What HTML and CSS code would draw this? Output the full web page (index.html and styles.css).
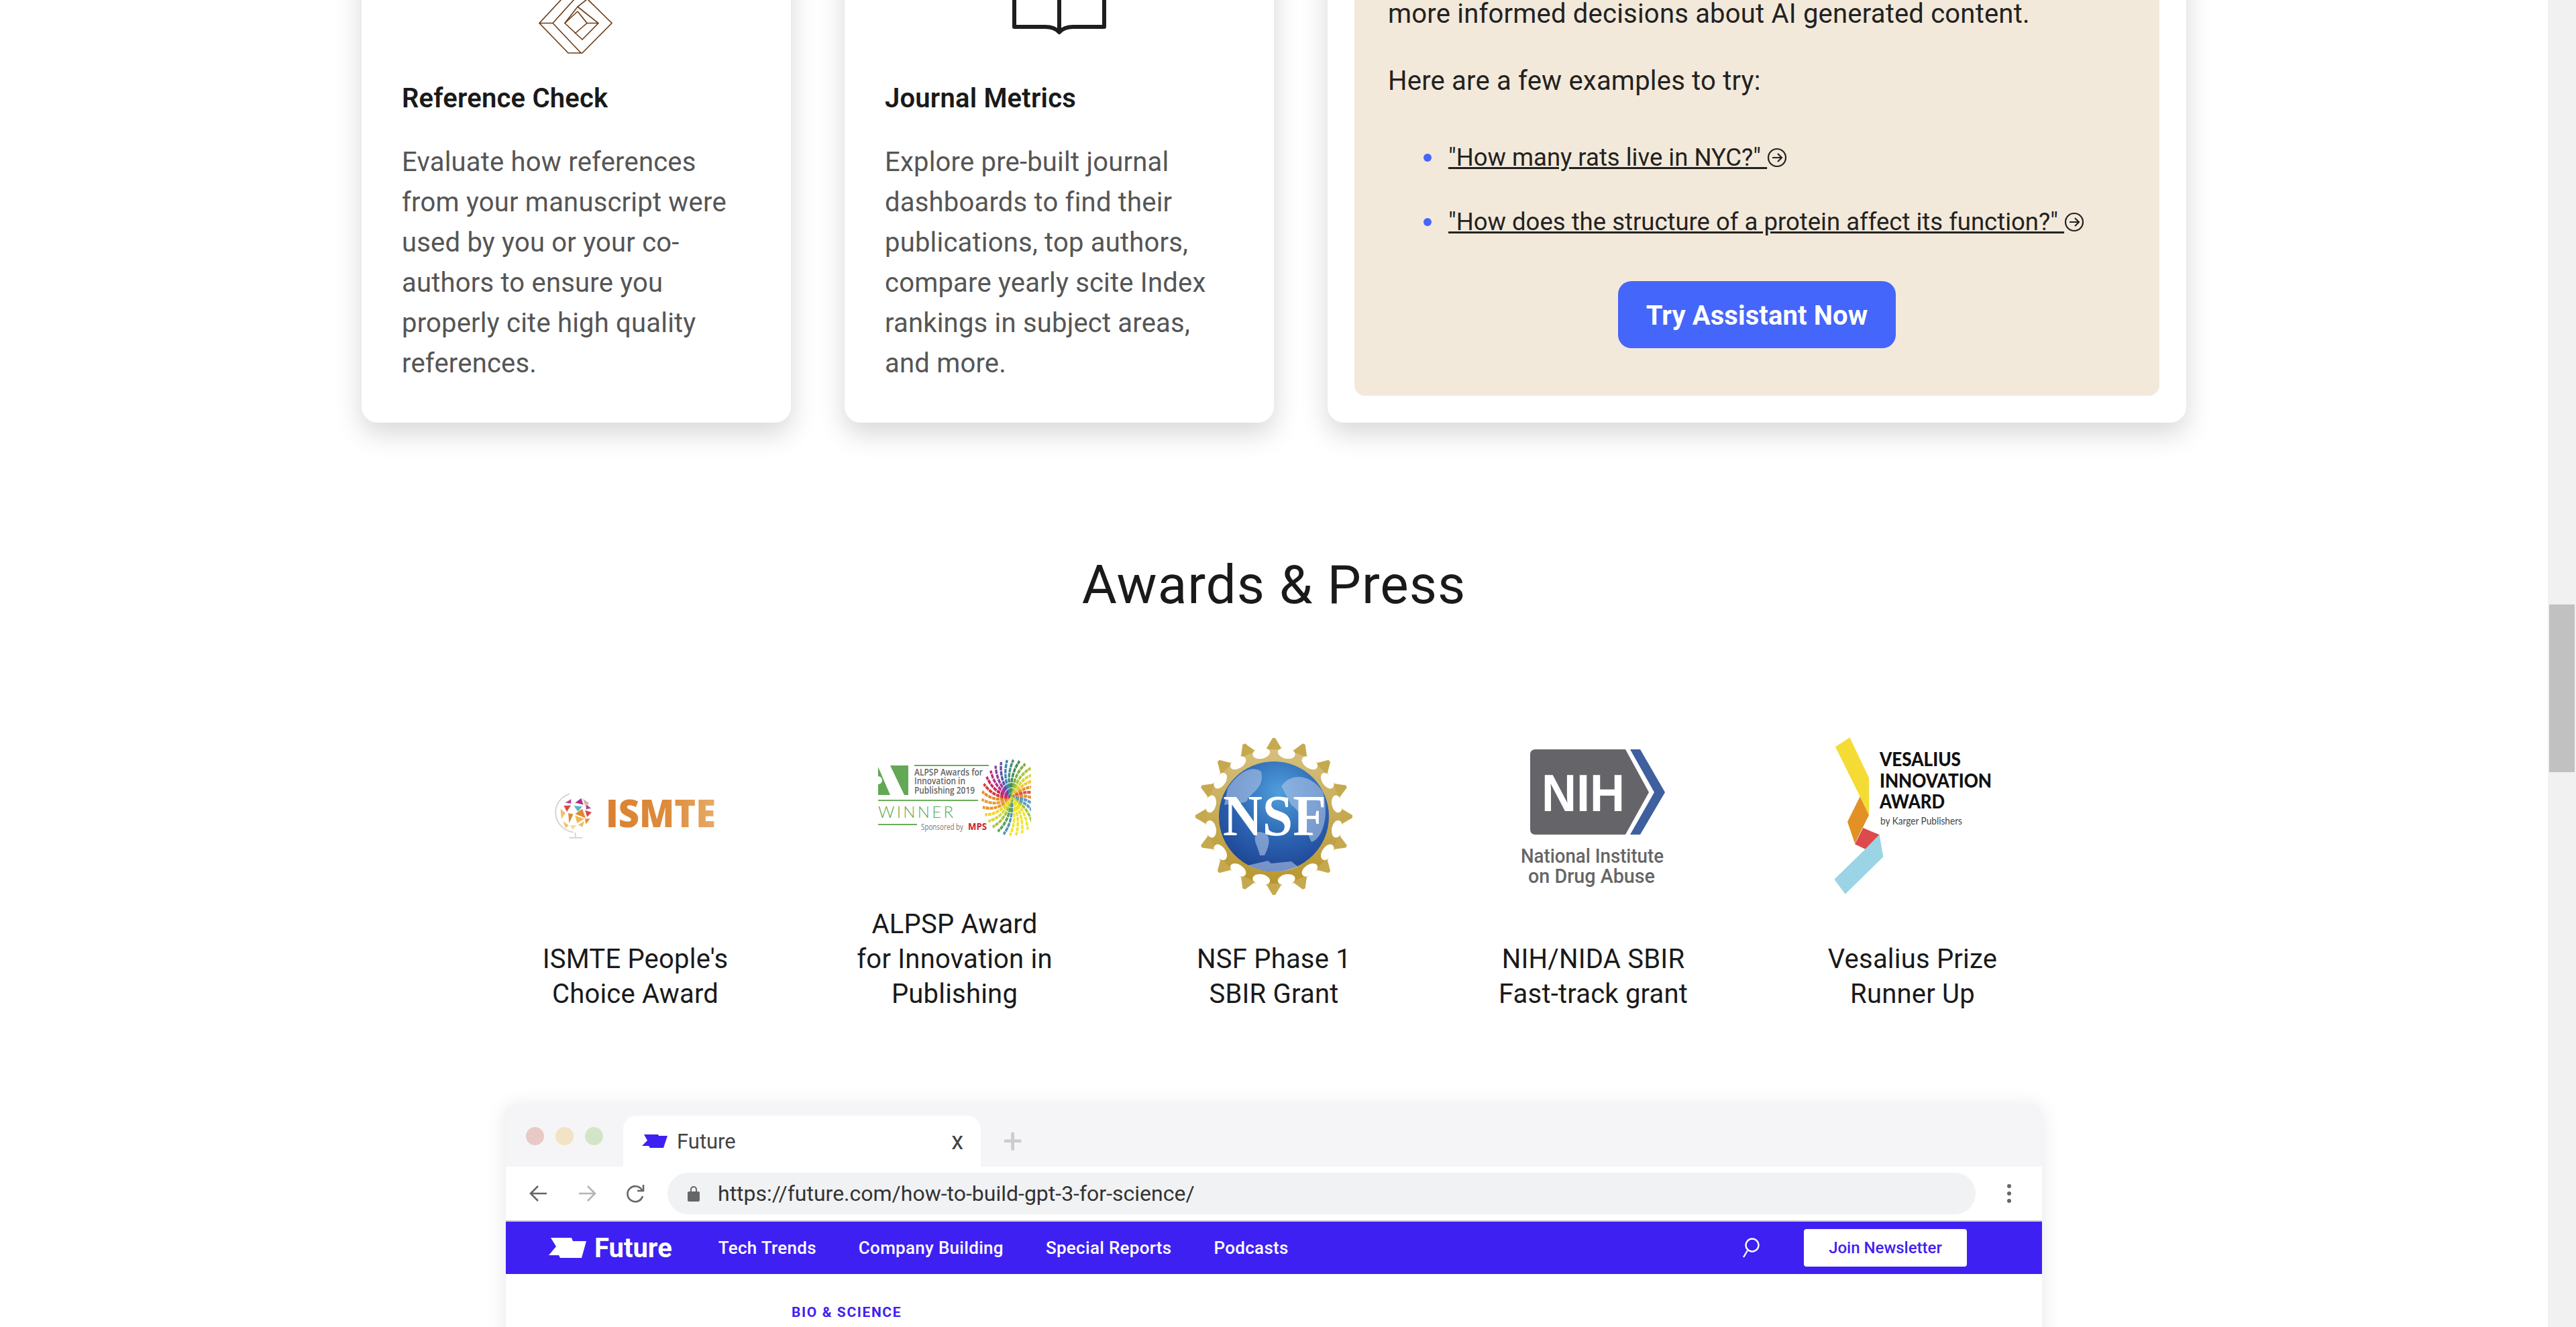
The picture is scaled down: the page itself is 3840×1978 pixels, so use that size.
FILE: index.html
```html
<!DOCTYPE html>
<html>
<head>
  <meta charset="UTF-8">
  <title>Awards &amp; Press</title>
  <link rel="stylesheet" href="styles.css">
</head>
<body>
  <div class="page">
    <main class="content">

      <section class="cards">
        <article class="card">
          <svg class="card-icon" viewBox="600 -100 520 217" fill="none" stroke="#6b3a12" stroke-width="1.6">
            <path d="M838 -1 L805 34.5 L848 79 H869 L913 34.5 L877 -1"/>
            <path d="M805 34.5 H825 L867 79 M857 -1 L825 34.5"/>
            <path d="M876 -1 L862 10 L843 34.5 L869 59 L893 34.5 L862 10"/>
            <path d="M862 17 L876 34.5 L858 50 M876 34.5 H893 M843 34.5 L862 17"/>
          </svg>
          <h3 class="card-title">Reference Check</h3>
          <p class="card-text">Evaluate how references from your manuscript were used by you or your co-authors to ensure you properly cite high quality references.</p>
        </article>

        <article class="card">
          <svg class="card-icon" viewBox="1319 -100 520 217" fill="none" stroke="#1e1e1c" stroke-width="6" stroke-linejoin="round">
            <path d="M1512 -60 V40 H1558 Q1572 40 1579 48 Q1586 40 1600 40 H1646 V-60"/>
            <path d="M1579 -60 V48"/>
          </svg>
          <h3 class="card-title">Journal Metrics</h3>
          <p class="card-text">Explore pre-built journal dashboards to find their publications, top authors, compare yearly scite Index rankings in subject areas, and more.</p>
        </article>

        <article class="card card-wide">
          <div class="panel">
            <p class="panel-text">more informed decisions about AI generated content.</p>
            <p class="panel-text">Here are a few examples to try:</p>
            <ul class="examples">
              <li>
                <a href="#">"How many rats live in NYC?"&nbsp;</a><svg class="go-icon" viewBox="0 0 30 30" fill="none" stroke="#222" stroke-width="2.2"><circle cx="15" cy="15" r="13"/><path d="M8 15 H22 M16 9 L22 15 L16 21"/></svg>
              </li>
              <li>
                <a href="#">"How does the structure of a protein affect its function?"&nbsp;</a><svg class="go-icon" viewBox="0 0 30 30" fill="none" stroke="#222" stroke-width="2.2"><circle cx="15" cy="15" r="13"/><path d="M8 15 H22 M16 9 L22 15 L16 21"/></svg>
              </li>
            </ul>
            <div class="try-row"><a class="try-btn" href="#">Try Assistant Now</a></div>
          </div>
        </article>
      </section>

      <h2 class="awards-title">Awards &amp; Press</h2>

      <section class="awards">
        <div class="award">
          <svg class="award-logo" viewBox="709 1095 476 240">
            <defs>
              <linearGradient id="ismte" x1="0" x2="1" y1="0" y2="0">
                <stop offset="0" stop-color="#db8130"/>
                <stop offset="0.55" stop-color="#dd8b3c"/>
                <stop offset="1" stop-color="#e6ab66"/>
              </linearGradient>
            </defs>
            <g transform="translate(810 1170) scale(.3333)">
              <path d="M118 40 C70 55 52 95 55 130 C58 170 90 205 135 212 M143 212 V235 M115 236 H175" fill="none" stroke="#d6d6d0" stroke-width="6"/>
              <g stroke="#fff" stroke-width="2">
                <polygon points="95,80 125,62 125,85" fill="#b6418f"/>
                <polygon points="140,80 170,58 180,90" fill="#a8308c"/>
                <polygon points="175,60 205,80 190,105" fill="#d9b0a0"/>
                <polygon points="90,92 125,90 105,122" fill="#d8474a"/>
                <polygon points="135,92 175,95 155,122" fill="#58b5c8"/>
                <polygon points="190,85 215,105 190,110" fill="#a8408c"/>
                <polygon points="185,112 218,122 195,145" fill="#d8474a"/>
                <polygon points="175,105 190,150 140,130" fill="#e08a30"/>
                <polygon points="75,105 100,125 80,155" fill="#f2c063"/>
                <polygon points="110,125 135,130 115,175" fill="#e08a30"/>
                <polygon points="85,160 115,180 100,195" fill="#f2c063"/>
                <polygon points="140,135 185,152 150,172" fill="#f0b74a"/>
                <polygon points="120,180 150,180 130,200" fill="#f5d592"/>
                <polygon points="155,178 185,160 175,190" fill="#efb768"/>
                <polygon points="185,150 210,150 190,178" fill="#e58c34"/>
              </g>
            </g>
            <text class="logo-ismte" x="903" y="1233" textLength="164" lengthAdjust="spacingAndGlyphs" fill="url(#ismte)">ISMTE</text>
          </svg>
          <p class="award-name">ISMTE People's<br>Choice Award</p>
        </div>

        <div class="award">
          <svg class="award-logo" viewBox="1185 1095 476 240">
            <defs>
              <clipPath id="fan-clip"><rect x="1440" y="1120" width="97" height="130"/></clipPath>
              <path id="blade" d="M0 0 C-12 -1 -36 1 -56 -22" fill="none" stroke-width="4.6" stroke-dasharray="7 1.2"/>
            </defs>
            <path d="M1309 1143 L1327 1185 H1309 Z M1327 1141 H1354 V1185 H1348 Z" fill="#63a855"/>
            <circle cx="1309" cy="1163" r="6" fill="#fff"/>
            <path d="M1363 1141 H1474 M1309 1193 H1458 M1309 1229 H1367" stroke="#6aae5a" stroke-width="2"/>
            <text class="logo-alpsp" x="1363" y="1156" textLength="102" lengthAdjust="spacingAndGlyphs">ALPSP Awards for</text>
            <text class="logo-alpsp" x="1363" y="1169" textLength="76" lengthAdjust="spacingAndGlyphs">Innovation in</text>
            <text class="logo-alpsp" x="1363" y="1183" textLength="90" lengthAdjust="spacingAndGlyphs">Publishing 2019</text>
            <text class="logo-winner" x="1309" y="1219" textLength="112">WINNER</text>
            <text class="logo-sponsor" x="1373" y="1237" textLength="63" lengthAdjust="spacingAndGlyphs">Sponsored by</text>
            <text class="logo-mps" x="1443" y="1237" textLength="28" lengthAdjust="spacingAndGlyphs">MPS</text>
            <g clip-path="url(#fan-clip)">
              <g transform="translate(1508 1189) scale(.74 .94)">
                <use href="#blade" transform="rotate(-36)" stroke="#e79434"/>
                <use href="#blade" transform="rotate(-24)" stroke="#e3a13a"/>
                <use href="#blade" transform="rotate(-12)" stroke="#e68a2c"/>
                <use href="#blade" transform="rotate(0)" stroke="#d33b3e"/>
                <use href="#blade" transform="rotate(12)" stroke="#c42a5e"/>
                <use href="#blade" transform="rotate(24)" stroke="#bd2f8a"/>
                <use href="#blade" transform="rotate(36)" stroke="#8d3fa0"/>
                <use href="#blade" transform="rotate(48)" stroke="#5a4fa8"/>
                <use href="#blade" transform="rotate(60)" stroke="#3f85ad"/>
                <use href="#blade" transform="rotate(72)" stroke="#3f9080"/>
                <use href="#blade" transform="rotate(84)" stroke="#468c50"/>
                <use href="#blade" transform="rotate(96)" stroke="#7fae3c"/>
                <use href="#blade" transform="rotate(108)" stroke="#a8c43c"/>
                <use href="#blade" transform="rotate(120)" stroke="#d8d83a"/>
                <use href="#blade" transform="rotate(132)" stroke="#eecb30"/>
                <use href="#blade" transform="rotate(144)" stroke="#e79434"/>
                <use href="#blade" transform="rotate(156)" stroke="#dc5a40"/>
                <use href="#blade" transform="rotate(168)" stroke="#e79434"/>
                <use href="#blade" transform="rotate(180)" stroke="#5e9ec0"/>
                <use href="#blade" transform="rotate(192)" stroke="#5e9ec0"/>
                <use href="#blade" transform="rotate(204)" stroke="#a7c43c"/>
                <use href="#blade" transform="rotate(216)" stroke="#eee52a"/>
                <use href="#blade" transform="rotate(228)" stroke="#eee52a"/>
                <use href="#blade" transform="rotate(240)" stroke="#f0e030"/>
                <use href="#blade" transform="rotate(252)" stroke="#eee52a"/>
                <use href="#blade" transform="rotate(264)" stroke="#4f95b0"/>
                <use href="#blade" transform="rotate(276)" stroke="#5aa05a"/>
                <use href="#blade" transform="rotate(288)" stroke="#a7c43c"/>
                <use href="#blade" transform="rotate(300)" stroke="#d8d83a"/>
                <use href="#blade" transform="rotate(312)" stroke="#edd82e"/>
              </g>
            </g>
          </svg>
          <p class="award-name">ALPSP Award<br>for Innovation in<br>Publishing</p>
        </div>

        <div class="award">
          <svg class="award-logo" viewBox="1661 1095 476 240">
            <defs>
              <radialGradient id="globe" cx="0.55" cy="0.28" r="0.8">
                <stop offset="0" stop-color="#4f9fdc"/>
                <stop offset="0.55" stop-color="#2b62b0"/>
                <stop offset="1" stop-color="#1c3f8e"/>
              </radialGradient>
              <linearGradient id="gold" x1="0" x2="0" y1="0" y2="1">
                <stop offset="0" stop-color="#d6c07c"/>
                <stop offset="1" stop-color="#b8962e"/>
              </linearGradient>
              <polygon id="spike" points="-12,-100 -2,-117 2,-117 12,-100" fill="#c6a94e"/>
              <ellipse id="hole" cx="0" cy="-96" rx="13" ry="8" fill="#fff"/>
            </defs>
            <circle cx="1899" cy="1217" r="103" fill="url(#gold)"/>
            <g transform="translate(1899 1217)">
              <use href="#spike"/><use href="#spike" transform="rotate(22.5)"/><use href="#spike" transform="rotate(45)"/><use href="#spike" transform="rotate(67.5)"/>
              <use href="#spike" transform="rotate(90)"/><use href="#spike" transform="rotate(112.5)"/><use href="#spike" transform="rotate(135)"/><use href="#spike" transform="rotate(157.5)"/>
              <use href="#spike" transform="rotate(180)"/><use href="#spike" transform="rotate(202.5)"/><use href="#spike" transform="rotate(225)"/><use href="#spike" transform="rotate(247.5)"/>
              <use href="#spike" transform="rotate(270)"/><use href="#spike" transform="rotate(292.5)"/><use href="#spike" transform="rotate(315)"/><use href="#spike" transform="rotate(337.5)"/>
              <use href="#hole" transform="rotate(11.25)"/><use href="#hole" transform="rotate(33.75)"/><use href="#hole" transform="rotate(56.25)"/><use href="#hole" transform="rotate(78.75)"/>
              <use href="#hole" transform="rotate(101.25)"/><use href="#hole" transform="rotate(123.75)"/><use href="#hole" transform="rotate(146.25)"/><use href="#hole" transform="rotate(168.75)"/>
              <use href="#hole" transform="rotate(191.25)"/><use href="#hole" transform="rotate(213.75)"/><use href="#hole" transform="rotate(236.25)"/><use href="#hole" transform="rotate(258.75)"/>
              <use href="#hole" transform="rotate(281.25)"/><use href="#hole" transform="rotate(303.75)"/><use href="#hole" transform="rotate(326.25)"/><use href="#hole" transform="rotate(348.75)"/>
            </g>
            <circle cx="1899" cy="1217" r="82" fill="url(#globe)"/>
            <g fill="#b0c4e6" opacity=".6">
              <path d="M1830 1175 C1850 1145 1870 1142 1880 1150 C1885 1170 1870 1180 1860 1190 C1860 1200 1845 1195 1825 1200 Z"/>
              <path d="M1910 1172 C1925 1150 1955 1155 1972 1180 C1982 1215 1972 1250 1955 1255 C1945 1235 1945 1215 1925 1200 Z"/>
              <path d="M1875 1240 C1895 1240 1895 1255 1885 1275 L1878 1275 C1875 1260 1865 1250 1875 1240 Z"/>
              <path d="M1860 1290 L1890 1283 L1895 1287 L1925 1284 L1935 1292 C1915 1302 1885 1302 1860 1290 Z"/>
            </g>
            <text class="logo-nsf" x="1823" y="1245" textLength="154" lengthAdjust="spacingAndGlyphs">NSF</text>
          </svg>
          <p class="award-name">NSF Phase 1<br>SBIR Grant</p>
        </div>

        <div class="award">
          <svg class="award-logo" viewBox="2137 1095 476 240">
            <path d="M2289 1117 H2423 L2458 1181 L2423 1244 H2289 Q2281 1244 2281 1236 V1125 Q2281 1117 2289 1117 Z" fill="#656569"/>
            <path d="M2430 1117 H2445 L2482 1181 L2445 1244 H2430 L2466 1181 Z" fill="#3f5f9e"/>
            <text class="logo-nih" x="2298" y="1209" textLength="124" lengthAdjust="spacingAndGlyphs">NIH</text>
            <text class="logo-nida" x="2267" y="1286" textLength="213" lengthAdjust="spacingAndGlyphs">National Institute</text>
            <text class="logo-nida" x="2278" y="1316" textLength="189" lengthAdjust="spacingAndGlyphs">on Drug Abuse</text>
          </svg>
          <p class="award-name">NIH/NIDA SBIR<br>Fast-track grant</p>
        </div>

        <div class="award">
          <svg class="award-logo" viewBox="2613 1095 476 240">
            <g transform="translate(2700 1080) scale(.3333)">
              <polygon points="108,100 172,58 258,238 258,405 218,322" fill="#f4dc35"/>
              <polygon points="218,322 258,405 195,532 162,435" fill="#e39025"/>
              <polygon points="232,462 305,493 242,557 195,535" fill="#dc4a4c"/>
              <polygon points="305,493 322,592 152,758 103,692 242,557" fill="#9bd4e4"/>
            </g>
            <text class="logo-vesalius" x="2802" y="1142" textLength="121" lengthAdjust="spacingAndGlyphs">VESALIUS</text>
            <text class="logo-vesalius" x="2802" y="1174" textLength="167" lengthAdjust="spacingAndGlyphs">INNOVATION</text>
            <text class="logo-vesalius" x="2802" y="1205" textLength="97" lengthAdjust="spacingAndGlyphs">AWARD</text>
            <text class="logo-karger" x="2803" y="1229" textLength="122" lengthAdjust="spacingAndGlyphs">by Karger Publishers</text>
          </svg>
          <p class="award-name">Vesalius Prize<br>Runner Up</p>
        </div>
      </section>

      <section class="browser">
        <div class="browser-tabs">
          <span class="dot dot-red"></span>
          <span class="dot dot-yellow"></span>
          <span class="dot dot-green"></span>
          <div class="tab">
            <svg class="tab-icon" viewBox="0 0 38 20"><path d="M3 0 H24 L25 2 H38 L32 20 H12 L10 17 H0 L8 9 Z" fill="#3f20f2"/></svg>
            <span class="tab-name">Future</span>
            <span class="tab-close">x</span>
          </div>
          <span class="tab-plus">+</span>
        </div>

        <div class="browser-bar">
          <svg class="bar-icon" viewBox="0 0 30 30" fill="none" stroke="#666" stroke-width="2.6"><path d="M27 15 H4 M14 4 L3 15 L14 26"/></svg>
          <svg class="bar-icon" viewBox="0 0 30 30" fill="none" stroke="#b4b4b4" stroke-width="2.6"><path d="M3 15 H26 M16 4 L27 15 L16 26"/></svg>
          <svg class="bar-icon" viewBox="0 0 30 30" fill="none" stroke="#666" stroke-width="2.6"><path d="M25 10 A11.5 11.5 0 1 0 26 19"/><path d="M27 2 V11 H18" /></svg>
          <div class="url-pill">
            <svg class="lock-icon" viewBox="0 0 18 24"><path d="M5 10 V6 A4 4 0 0 1 13 6 V10" fill="none" stroke="#666" stroke-width="2"/><rect x="0" y="9" width="18" height="15" rx="2" fill="#666"/></svg>
            <span class="url-text">https://future.com/how-to-build-gpt-3-for-science/</span>
          </div>
          <svg class="kebab" viewBox="0 0 6 28" fill="#666"><circle cx="3" cy="3" r="3"/><circle cx="3" cy="14" r="3"/><circle cx="3" cy="25" r="3"/></svg>
        </div>

        <nav class="future-nav">
          <svg class="future-mark" viewBox="0 0 56 30"><path d="M3 0 H34 L36 5 H56 L49 30 H17 L15 26 H0 L11 13 Z" fill="#fff"/></svg>
          <span class="future-name">Future</span>
          <a class="future-link" href="#">Tech Trends</a>
          <a class="future-link" href="#">Company Building</a>
          <a class="future-link" href="#">Special Reports</a>
          <a class="future-link" href="#">Podcasts</a>
          <svg class="future-search" viewBox="0 0 28 30" fill="none" stroke="#fff" stroke-width="2.4"><circle cx="16" cy="11" r="9.5"/><path d="M9 19 L3 29"/></svg>
          <a class="future-join" href="#">Join Newsletter</a>
        </nav>

        <div class="article">
          <span class="article-tag">BIO &amp; SCIENCE</span>
        </div>
      </section>
    </main>

    <div class="scrollbar"><div class="scrollbar-thumb"></div></div>
  </div>
</body>
</html>
```

FILE: styles.css
```css
html, body {
  margin: 0;
  height: 1978px;
  overflow: hidden;
  background-color: #fff;
}
body {
  font-family: "Roboto", "Liberation Sans", sans-serif;
  color: #1a1a1a;
}
.page {
  display: flex;
  height: 1978px;
  overflow: hidden;
}
.content {
  flex: 1;
  min-width: 0;
}

/* scrollbar */
.scrollbar {
  width: 42px;
  flex-shrink: 0;
  background-color: #f1f1f1;
  padding: 901px 2px 0;
  box-sizing: border-box;
}
.scrollbar-thumb {
  height: 250px;
  background-color: #c1c1c1;
}

/* cards */
.cards {
  display: grid;
  grid-template-columns: 640px 640px 1280px;
  gap: 80px;
  justify-content: center;
  margin-top: -100px;
}
.card {
  background-color: #fff;
  border-radius: 24px;
  box-shadow: 0 16px 40px rgba(0, 0, 0, 0.16);
  padding: 0 60px 58px;
}
.card-icon {
  display: block;
  width: 520px;
  height: 217px;
}
.card-title {
  margin: 0 0 35px;
  font-size: 40px;
  line-height: 60px;
  font-weight: 600;
  color: #1a1a1a;
  letter-spacing: 0.2px;
}
.card-text {
  margin: 0;
  font-size: 40px;
  line-height: 60px;
  letter-spacing: 0.2px;
  color: #555;
}
.card-wide {
  padding: 40px;
  display: flex;
}
.panel {
  flex: 1;
  background-color: #f3e9da;
  border-radius: 0 0 16px 16px;
  padding: 51px 50px 70px;
}
.panel-text {
  margin: 0 0 40px;
  font-size: 40px;
  line-height: 60px;
  letter-spacing: 0.2px;
  color: #222;
}
.examples {
  margin: 54px 0 58px;
  padding: 0 0 0 90px;
  list-style: none;
  font-size: 36.5px;
  line-height: 60px;
  color: #222;
}
.examples li {
  position: relative;
  margin-bottom: 36px;
}
.examples li:last-child {
  margin-bottom: 0;
}
.examples li::before {
  content: "";
  position: absolute;
  left: -37px;
  top: 24px;
  width: 12px;
  height: 12px;
  border-radius: 50%;
  background-color: #4566fa;
}
.examples a {
  color: #222;
  text-decoration: underline;
}
.go-icon {
  width: 30px;
  height: 30px;
  vertical-align: -3px;
}
.try-row {
  display: flex;
  justify-content: center;
}
.try-btn {
  display: block;
  width: 414px;
  height: 100px;
  line-height: 103px;
  text-align: center;
  background-color: #4566fa;
  border-radius: 20px;
  color: #fff;
  font-size: 40px;
  font-weight: 700;
  letter-spacing: 0.1px;
  text-decoration: none;
}

/* awards */
.awards-title {
  margin: 194px 0 175px;
  font-size: 80px;
  line-height: 96px;
  font-weight: 400;
  letter-spacing: 1px;
  text-align: center;
  color: #1a1a1a;
}
.awards {
  display: grid;
  grid-template-columns: repeat(5, 476px);
  justify-content: center;
}
.award {
  display: flex;
  flex-direction: column;
  align-items: center;
}
.award-logo {
  display: block;
  width: 476px;
  height: 240px;
}
.award-name {
  margin: auto 0 0;
  padding-top: 17px;
  font-size: 40px;
  line-height: 52px;
  letter-spacing: 0.2px;
  text-align: center;
  color: #1a1a1a;
}

/* text inside the logos */
.logo-ismte {
  font-family: "Open Sans", sans-serif;
  font-weight: 800;
  font-size: 56px;
}
.logo-alpsp {
  font-family: "Open Sans", sans-serif;
  font-size: 14px;
  font-weight: 600;
  fill: #666;
}
.logo-winner {
  font-family: "Lato", sans-serif;
  font-size: 24px;
  font-weight: 300;
  fill: #5aa84c;
}
.logo-sponsor {
  font-family: "Open Sans", sans-serif;
  font-size: 13px;
  fill: #777;
}
.logo-mps {
  font-family: "Open Sans", sans-serif;
  font-size: 15px;
  font-weight: 700;
  fill: #c8242b;
}
.logo-nsf {
  font-family: "Liberation Serif", serif;
  font-size: 86px;
  font-weight: 700;
  fill: #fff;
}
.logo-nih {
  font-family: "Liberation Sans", sans-serif;
  font-size: 78px;
  font-weight: 700;
  fill: #fff;
}
.logo-nida {
  font-family: "Roboto", sans-serif;
  font-size: 29px;
  font-weight: 500;
  fill: #666;
}
.logo-vesalius {
  font-family: "Lato", sans-serif;
  font-size: 29px;
  font-weight: 900;
  fill: #111;
}
.logo-karger {
  font-family: "Lato", sans-serif;
  font-size: 16px;
  fill: #444;
}

/* browser picture */
.browser {
  width: 2290px;
  margin: 137px auto 0;
  border-radius: 14px 14px 0 0;
  box-shadow: 0 4px 30px rgba(0, 0, 0, 0.1);
  height: 420px;
  overflow: hidden;
  background-color: #fff;
}
.browser-tabs {
  display: flex;
  align-items: flex-start;
  height: 94px;
  background-color: #f5f5f7;
  padding-left: 30px;
  box-sizing: border-box;
}
.dot {
  width: 27px;
  height: 27px;
  border-radius: 50%;
  margin: 35px 17px 0 0;
}
.dot-red { background-color: #e8c9c6; }
.dot-yellow { background-color: #f1e3c3; }
.dot-green { background-color: #d3e5c9; }
.tab {
  display: flex;
  align-items: center;
  width: 533px;
  height: 76px;
  margin: 18px 0 0 13px;
  padding: 0 26px 0 28px;
  box-sizing: border-box;
  background-color: #fff;
  border-radius: 20px 20px 0 0;
}
.tab-icon {
  width: 38px;
  height: 20px;
}
.tab-name {
  margin-left: 14px;
  font-size: 31px;
  color: #444;
}
.tab-close {
  margin-left: auto;
  font-size: 36px;
  color: #444;
}
.tab-plus {
  margin: 30px 0 0 33px;
  font-size: 52px;
  line-height: 52px;
  color: #ccc;
}
.browser-bar {
  display: flex;
  align-items: center;
  height: 82px;
  padding-left: 34px;
  box-sizing: border-box;
  border-bottom: 2px solid #ccc;
}
.bar-icon {
  width: 30px;
  height: 30px;
  margin-right: 42px;
}
.url-pill {
  display: flex;
  align-items: center;
  width: 1950px;
  height: 62px;
  margin-left: -9px;
  border-radius: 31px;
  background-color: #f1f2f4;
  padding-left: 30px;
  box-sizing: border-box;
}
.lock-icon {
  width: 18px;
  height: 24px;
}
.url-text {
  margin-left: 27px;
  font-size: 32px;
  color: #333;
}
.kebab {
  width: 6px;
  height: 28px;
  margin-left: 47px;
}
.future-nav {
  display: flex;
  align-items: center;
  height: 78px;
  padding: 0 112px 0 64px;
  background-color: #3f20f2;
}
.future-mark {
  width: 56px;
  height: 30px;
}
.future-name {
  margin: 0 69px 0 12px;
  font-size: 40px;
  font-weight: 700;
  color: #fff;
}
.future-link {
  margin-right: 63px;
  font-size: 26px;
  font-weight: 500;
  letter-spacing: 0.3px;
  color: #fff;
  text-decoration: none;
}
.future-search {
  width: 28px;
  height: 30px;
  margin: 0 65px 0 auto;
}
.future-join {
  width: 243px;
  height: 56px;
  line-height: 56px;
  text-align: center;
  background-color: #fff;
  border-radius: 4px;
  font-size: 24px;
  font-weight: 500;
  color: #3f20f2;
  text-decoration: none;
}
.article {
  padding: 45px 0 0 426px;
}
.article-tag {
  font-size: 21px;
  font-weight: 700;
  letter-spacing: 1.6px;
  color: #3f20f2;
}
```
